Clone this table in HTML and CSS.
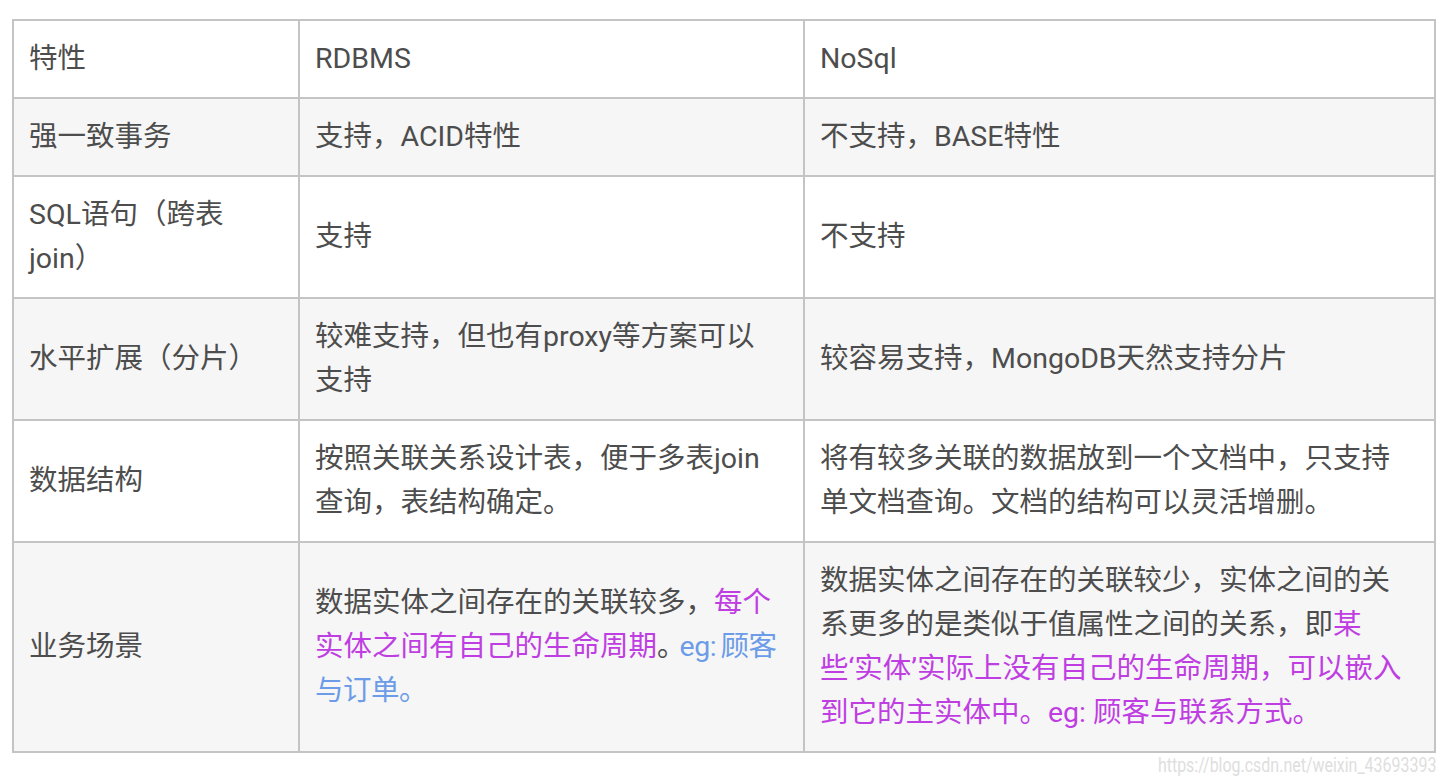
FILE: index.html
```html
<!DOCTYPE html>
<html lang="zh-CN">
<head>
  <meta charset="UTF-8" />
  <meta name="viewport" content="width=device-width, initial-scale=1.0" />
  <title>RDBMS vs NoSql</title>
  <link rel="stylesheet" href="styles.css">
</head>
<body>
  <div class="page">
    <table class="compare">
      <colgroup>
        <col class="col-name">
        <col class="col-rdbms">
        <col class="col-nosql">
      </colgroup>
      <tr>
        <td>特性</td>
        <td>RDBMS</td>
        <td>NoSql</td>
      </tr>
      <tr>
        <td>强一致事务</td>
        <td>支持，ACID特性</td>
        <td>不支持，BASE特性</td>
      </tr>
      <tr>
        <td>SQL语句（跨表join）</td>
        <td>支持</td>
        <td>不支持</td>
      </tr>
      <tr>
        <td>水平扩展（分片）</td>
        <td>较难支持，但也有proxy等方案可以支持</td>
        <td>较容易支持，MongoDB天然支持分片</td>
      </tr>
      <tr>
        <td>数据结构</td>
        <td>按照关联关系设计表，便于多表join查询，表结构确定。</td>
        <td>将有较多关联的数据放到一个文档中，只支持单文档查询。文档的结构可以灵活增删。</td>
      </tr>
      <tr>
        <td>业务场景</td>
        <td>数据实体之间存在的关联较多，<span class="pink">每个实体之间有自己的生命周期</span><span class="stop">。</span><span class="blue">eg: 顾客与订单。</span></td>
        <td>数据实体之间存在的关联较少，实体之间的关系更多的是类似于值属性之间的关系，即<span class="pink">某些‘实体’实际上没有自己的生命周期，可以嵌入到它的主实体中。eg: 顾客与联系方式。</span></td>
      </tr>
    </table>
    <div class="watermark">https://blog.csdn.net/weixin_43693393</div>
  </div>
</body>
</html>
```

FILE: styles.css
```css
body {
  margin: 0;
  background: #fff;
  font-family: Roboto, "Noto Sans CJK SC", sans-serif;
  color: #4d4d4d;
}
.page {
  padding: 19px 12px 0 12px;
  position: relative;
  height: 763px;
}
.compare {
  width: 1422px;
  border-collapse: collapse;
  table-layout: fixed;
  font-size: 28.5px;
  line-height: 44px;
}
.col-name {
  width: 286px;
}
.col-rdbms {
  width: 505px;
}
.col-nosql {
  width: 631px;
}
.compare td {
  border: 2px solid #c4c4c4;
  padding: 16px 22px 16px 15px;
  vertical-align: middle;
}
.compare tr:nth-child(even) td {
  background: #f6f6f6;
}
.pink {
  color: #bf3ee2;
}
.stop {
  letter-spacing: -6px;
}
.blue {
  color: #6c9ce8;
  letter-spacing: -0.5px;
  word-spacing: -2px;
}
.watermark {
  position: absolute;
  right: 10px;
  bottom: 5px;
  font-family: Roboto, sans-serif;
  font-size: 21px;
  color: #dedede;
  transform: scaleX(0.76);
  transform-origin: right center;
}
```
